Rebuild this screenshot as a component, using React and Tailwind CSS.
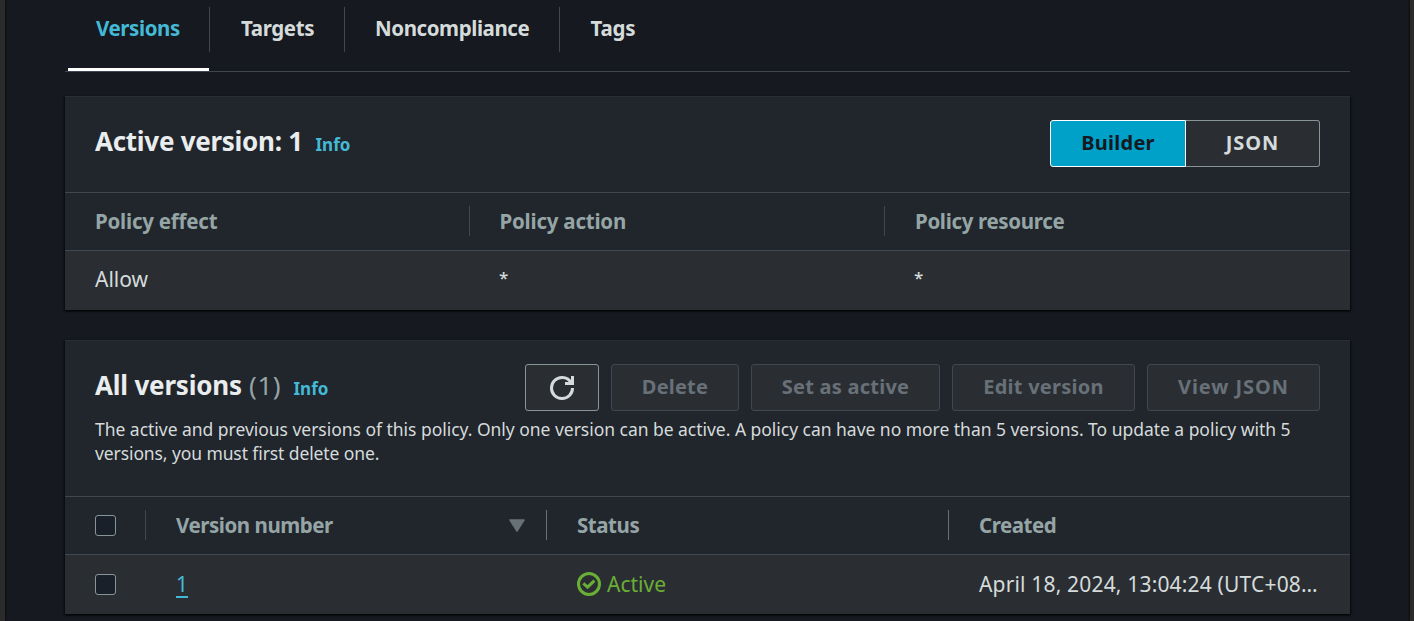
const cardClass =
  'flex flex-col border-t border-[#2a2e33] bg-[#21252c] shadow-[0_1px_2px_0_#000000b3,1px_1px_2px_0_#00000066,-1px_1px_2px_0_#00000066]';

const disabledButton =
  'flex h-[47px] items-center justify-center rounded-[3px] border border-[#414750] bg-[#2a2e33] pb-[2px] text-[20px] font-bold text-[#687078]';

function Tab({ label, className }) {
  return (
    <div className={`flex h-[45px] border-r ${className}`}>
      <span className="leading-[43px]">{label}</span>
    </div>
  );
}

function Checkbox() {
  return (
    <span
      role="checkbox"
      aria-checked="false"
      className="block h-[21px] w-[21px] rounded-[3px] border border-[#879596] bg-[#1a2029]"
    />
  );
}

function ColumnHeader({ children, className }) {
  return (
    <div className={`flex h-[30px] items-center justify-between leading-[28px] ${className}`}>{children}</div>
  );
}

function RefreshIcon() {
  return (
    <svg width="24" height="24" viewBox="0 0 16 16" fill="none" stroke="#d5dbdb" strokeWidth="2">
      <path d="M10 5h5V0" />
      <path d="M15 8a6.957 6.957 0 0 1-7 7 6.957 6.957 0 0 1-7-7 6.957 6.957 0 0 1 7-7 6.87 6.87 0 0 1 6.3 4" />
    </svg>
  );
}

function ActiveIcon() {
  return (
    <svg className="-mt-px" width="24" height="24" viewBox="0 0 24 24" fill="none" stroke="#6aaf35" strokeWidth="3">
      <circle cx="12" cy="12" r="10.5" />
      <path d="M6.3 11.4L10.6 15.2L17.4 8.7" />
    </svg>
  );
}

export default function App() {
  return (
    <div className="flex h-[621px] w-[1414px] overflow-hidden bg-[#16191f] font-['Noto_Sans','Open_Sans',sans-serif] text-[21px] text-[#d5dbdb]">
      <div className="w-[5px] shrink-0 bg-[#2b2b2b] shadow-[0_0_3px_0_#000000]" />
      <main className="flex flex-1 flex-col px-[60px]">
        <nav className="flex h-[72px] border-b border-[#414750] pl-[3px] pt-[7px] text-[20.5px] font-bold tracking-[-0.42px]">
          <div className="flex w-[142px] flex-col justify-between">
            <Tab label="Versions" className="w-[142px] border-[#414750] pl-[28px] text-[#44b9d6]" />
            <div className="h-[3px] w-[141px] bg-white" />
          </div>
          <Tab label="Targets" className="w-[135px] border-[#414750] pl-[31px] tracking-[-0.38px]" />
          <Tab label="Noncompliance" className="w-[215px] border-[#414750] pl-[30px]" />
          <Tab label="Tags" className="w-[110px] border-transparent pl-[30.5px] tracking-[-0.2px]" />
        </nav>

        <section className={`mt-6 h-[214px] ${cardClass}`}>
          <header className="flex h-[95px] items-start justify-between px-[30px] pt-[23px]">
            <h2 className="flex items-baseline text-[26px] font-bold leading-[42px] tracking-[-0.28px] text-[#eaeded]">
              <span className="w-[220.5px] whitespace-nowrap">Active version: 1</span>
              <a className="text-[17px] tracking-normal text-[#44b9d6]">Info</a>
            </h2>
            <div className="flex h-[47px] text-[20px] font-bold tracking-[0.28px]">
              <button className="w-[136px] rounded-l-[3px] border border-white bg-[#00a1c9] pb-[2px] text-[#16191f]">
                Builder
              </button>
              <button className="w-[134px] rounded-r-[3px] border border-l-0 border-[#879596] bg-[#2a2e33] pb-[2px] tracking-[1px]">
                JSON
              </button>
            </div>
          </header>
          <div className="flex h-[59px] items-center border-y border-[#414750] pb-px text-[20.5px] font-bold tracking-[-0.22px] text-[#95a5a6]">
            <ColumnHeader className="w-[405px] border-r border-[#414750] pl-[30px]">Policy effect</ColumnHeader>
            <ColumnHeader className="w-[415px] border-r border-[#414750] pl-[29.5px]">Policy action</ColumnHeader>
            <ColumnHeader className="pl-[30px] tracking-[-0.34px]">Policy resource</ColumnHeader>
          </div>
          <div className="flex flex-1 items-center bg-[#2a2e33] pb-px">
            <span className="w-[405px] pl-[30px]">Allow</span>
            <span className="w-[415px] pb-[5px] pl-[29px] text-[17px] font-medium">*</span>
            <span className="pb-[5px] pl-[29px] text-[17px] font-medium">*</span>
          </div>
        </section>

        <section className={`mt-[30px] h-[274px] ${cardClass}`}>
          <header className="h-[155px] px-[30px] pt-[23px]">
            <div className="flex h-[47px] justify-between">
              <h2 className="flex items-baseline text-[26px] font-bold leading-[42px] tracking-[-0.2px] text-[#eaeded]">
                <span className="w-[154px] whitespace-nowrap">All versions</span>
                <span className="w-[44.5px] font-normal tracking-[0.6px] text-[#95a5a6]">(1)</span>
                <a className="text-[17px] tracking-normal text-[#44b9d6]">Info</a>
              </h2>
              <div className="flex gap-3">
                <button className="flex w-[74px] items-center justify-center rounded-[3px] border border-[#879596] bg-[#2a2e33]">
                  <RefreshIcon />
                </button>
                <button disabled className={`w-[128px] tracking-[0.2px] ${disabledButton}`}>Delete</button>
                <button disabled className={`w-[189px] tracking-[0.24px] ${disabledButton}`}>Set as active</button>
                <button disabled className={`w-[183px] tracking-[0.26px] ${disabledButton}`}>Edit version</button>
                <button disabled className={`w-[173px] tracking-[0.95px] ${disabledButton}`}>View JSON</button>
              </div>
            </div>
            <p className="mt-[6px] whitespace-nowrap text-[17.5px] leading-6 tracking-[-0.03px]">
              The active and previous versions of this policy. Only one version can be active. A policy can have no more
              than 5 versions. To update a policy with 5
              <br />
              <span className="tracking-[-0.1px]">versions, you must first delete one.</span>
            </p>
          </header>
          <div className="flex h-[59px] items-center border-y border-[#414750] pb-px text-[20.5px] font-bold tracking-[-0.46px] text-[#95a5a6]">
            <ColumnHeader className="w-[81px] border-r border-[#414750] pl-[30px] pt-px">
              <Checkbox />
            </ColumnHeader>
            <ColumnHeader className="w-[401px] border-r border-[#687078] pl-[30px] pr-[21px]">
              Version number
              <svg className="mt-px" width="16" height="13" viewBox="0 0 16 13" fill="#687078" stroke="#687078" strokeWidth="1.5" strokeLinejoin="round">
                <path d="M1 1H15L8 12Z" />
              </svg>
            </ColumnHeader>
            <ColumnHeader className="w-[402px] border-r border-[#687078] pl-[30px]">Status</ColumnHeader>
            <ColumnHeader className="pl-[30px]">Created</ColumnHeader>
          </div>
          <div className="flex flex-1 items-center bg-[#2a2e33]">
            <div className="w-[81px] pl-[30px]">
              <Checkbox />
            </div>
            <div className="flex w-[401px] pb-[2px] pl-[30px]">
              <a className="h-[28px] border-b-2 border-[#44b9d6] leading-[28px] text-[#44b9d6]">1</a>
            </div>
            <div className="flex w-[402px] items-center gap-[6px] pl-[30px] leading-[30px] text-[#6aaf35]">
              <ActiveIcon />
              <span className="pb-px">Active</span>
            </div>
            <span className="whitespace-nowrap pl-[30px] tracking-[0.17px]">April 18, 2024, 13:04:24 (UTC+08…</span>
          </div>
        </section>
      </main>
      <div className="w-[4px] shrink-0 bg-[#2b2b2b] shadow-[0_0_3px_0_#000000]" />
    </div>
  );
}
